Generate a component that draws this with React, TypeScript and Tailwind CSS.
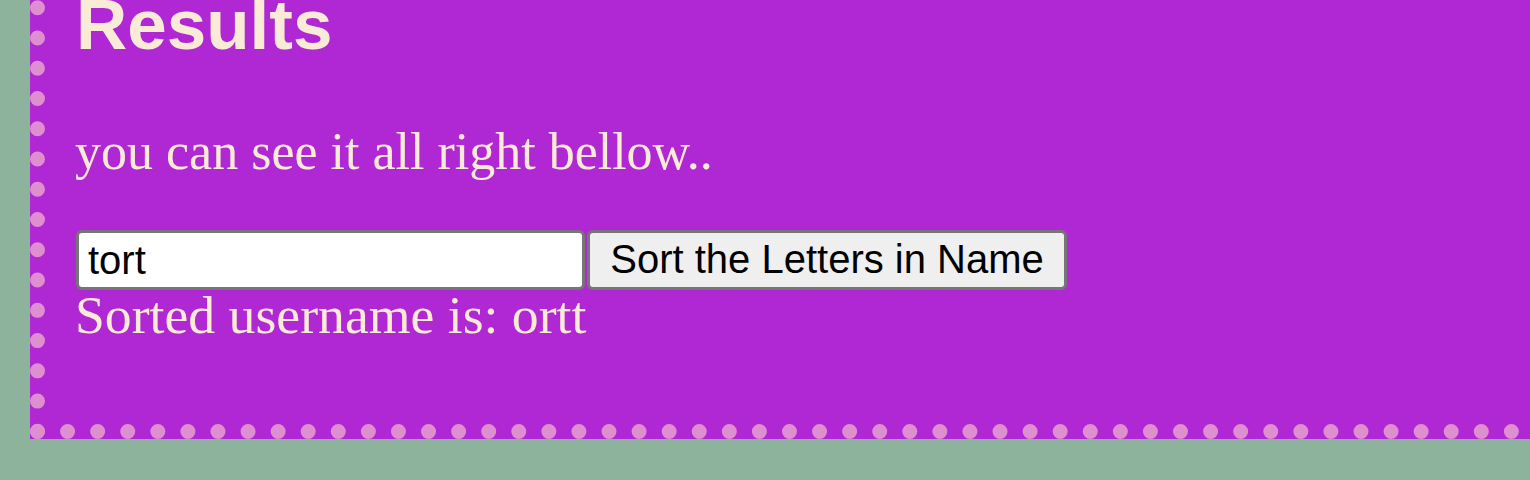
export default function App() {
  return (
    <div className="h-[480px] overflow-hidden bg-[#8eb39d] pl-[30px]">
      <div className="-mt-[30px] w-[1700px] border-b-[15px] border-l-[15px] border-dotted border-[#de8fd0] bg-[#b028d3] pl-[31px] pt-[20px] pb-[84px] text-[#faebd7]">
        <h1 className="text-[71px] font-bold leading-[70px] [font-family:'Liberation_Sans',Arial,sans-serif]">
          Results
        </h1>
        <p className="-ml-[1px] mt-[66px] text-[52px] leading-[52px] [font-family:'Liberation_Serif',Georgia,serif]">
          you can see it all right bellow..
        </p>
        <div className="mt-[52px] flex gap-[2px]">
          <input
            defaultValue="tort"
            className="h-[60px] w-[509px] rounded-[6px] border-[3px] border-[#767676] bg-white pl-[9px] text-[40px] leading-[46px] text-black outline-none [font-family:'Liberation_Sans',Arial,sans-serif]"
          />
          <button className="flex h-[60px] w-[480px] items-center justify-center rounded-[6px] border-[3px] border-[#767676] bg-[#efefef] pb-[3px] text-[40px] leading-[46px] text-black [font-family:'Liberation_Sans',Arial,sans-serif]">
            Sort the Letters in Name
          </button>
        </div>
        <p className="-ml-[1px] text-[53.7px] leading-[50px] [font-family:'Liberation_Serif',Georgia,serif]">
          Sorted username is: ortt
        </p>
      </div>
    </div>
  );
}
